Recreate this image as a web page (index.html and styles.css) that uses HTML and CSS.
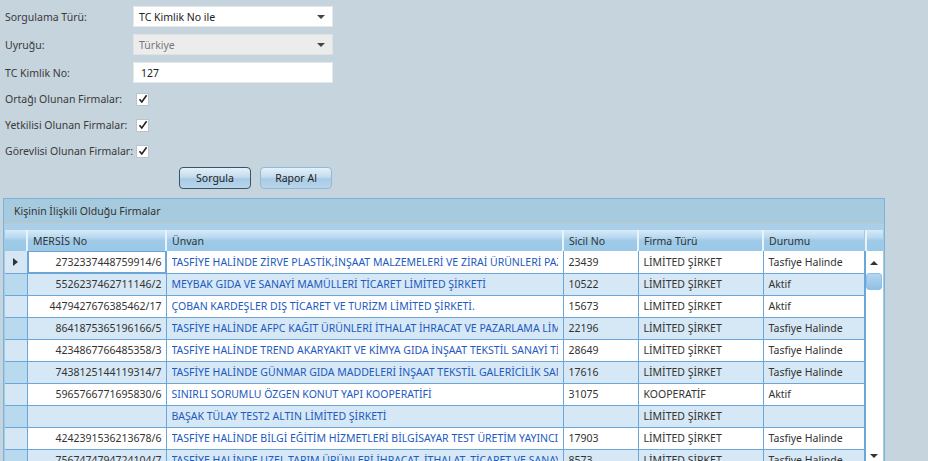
FILE: index.html
```html
<!DOCTYPE html>
<html lang="tr">
<head>
<meta charset="utf-8">
<link rel="stylesheet" href="styles.css">
</head>
<body>
<div class="page">
  <form class="form">
    <div class="frow">
      <label class="lbl">Sorgulama Türü:</label>
      <div class="select"><span>TC Kimlik No ile</span><span class="arrow"></span></div>
    </div>
    <div class="frow">
      <label class="lbl">Uyruğu:</label>
      <div class="select disabled"><span>Türkiye</span><span class="arrow"></span></div>
    </div>
    <div class="frow">
      <label class="lbl">TC Kimlik No:</label>
      <div class="input">127</div>
    </div>
    <div class="crow first">
      <label class="clbl">Ortağı Olunan Firmalar:</label>
      <span class="check"><svg width="10" height="10" viewBox="0 0 10 10"><path d="M1.5 5.2 L3.8 8 L8.6 1.2" fill="none" stroke="#222" stroke-width="1.6"/></svg></span>
    </div>
    <div class="crow">
      <label class="clbl">Yetkilisi Olunan Firmalar:</label>
      <span class="check"><svg width="10" height="10" viewBox="0 0 10 10"><path d="M1.5 5.2 L3.8 8 L8.6 1.2" fill="none" stroke="#222" stroke-width="1.6"/></svg></span>
    </div>
    <div class="crow">
      <label class="clbl">Görevlisi Olunan Firmalar:</label>
      <span class="check"><svg width="10" height="10" viewBox="0 0 10 10"><path d="M1.5 5.2 L3.8 8 L8.6 1.2" fill="none" stroke="#222" stroke-width="1.6"/></svg></span>
    </div>
    <div class="brow">
      <button type="button" class="btn primary">Sorgula</button>
      <button type="button" class="btn">Rapor Al</button>
    </div>
  </form>

  <section class="panel">
    <div class="ptitle">Kişinin İlişkili Olduğu Firmalar</div>
    <div class="band"></div>
    <div class="gridwrap">
      <table class="grid">
        <colgroup>
          <col class="c0"><col class="c1"><col class="c2"><col class="c3"><col class="c4"><col class="c5">
        </colgroup>
        <thead>
          <tr><th class="ind"></th><th>MERSİS No</th><th>Ünvan</th><th>Sicil No</th><th>Firma Türü</th><th>Durumu</th></tr>
        </thead>
        <tbody>
          <tr class="w sel"><td class="ind"><span class="tri"></span></td><td class="num cur">2732337448759914/6</td><td class="name"><div class="clip">TASFİYE HALİNDE ZİRVE PLASTİK,İNŞAAT MALZEMELERİ VE ZİRAİ ÜRÜNLERİ PAZARLAMA</div></td><td>23439</td><td>LİMİTED ŞİRKET</td><td>Tasfiye Halinde</td></tr>
          <tr class="b"><td class="ind"></td><td class="num">5526237462711146/2</td><td class="name"><div class="clip">MEYBAK GIDA VE SANAYİ MAMÜLLERİ TİCARET LİMİTED ŞİRKETİ</div></td><td>10522</td><td>LİMİTED ŞİRKET</td><td>Aktif</td></tr>
          <tr class="w"><td class="ind"></td><td class="num">4479427676385462/17</td><td class="name"><div class="clip">ÇOBAN KARDEŞLER DIŞ TİCARET VE TURİZM LİMİTED ŞİRKETİ.</div></td><td>15673</td><td>LİMİTED ŞİRKET</td><td>Aktif</td></tr>
          <tr class="b"><td class="ind"></td><td class="num">8641875365196166/5</td><td class="name"><div class="clip">TASFİYE HALİNDE AFPC KAĞIT ÜRÜNLERİ İTHALAT İHRACAT VE PAZARLAMA LİMİTED</div></td><td>22196</td><td>LİMİTED ŞİRKET</td><td>Tasfiye Halinde</td></tr>
          <tr class="w"><td class="ind"></td><td class="num">4234867766485358/3</td><td class="name"><div class="clip">TASFİYE HALİNDE TREND AKARYAKIT VE KİMYA GIDA İNŞAAT TEKSTİL SANAYİ TİCARET</div></td><td>28649</td><td>LİMİTED ŞİRKET</td><td>Tasfiye Halinde</td></tr>
          <tr class="b"><td class="ind"></td><td class="num">7438125144119314/7</td><td class="name"><div class="clip">TASFİYE HALİNDE GÜNMAR GIDA MADDELERİ İNŞAAT TEKSTİL GALERİCİLİK SANAYİ</div></td><td>17616</td><td>LİMİTED ŞİRKET</td><td>Tasfiye Halinde</td></tr>
          <tr class="w"><td class="ind"></td><td class="num">5965766771695830/6</td><td class="name"><div class="clip">SINIRLI SORUMLU ÖZGEN KONUT YAPI KOOPERATİFİ</div></td><td>31075</td><td>KOOPERATİF</td><td>Aktif</td></tr>
          <tr class="b"><td class="ind"></td><td class="num"></td><td class="name"><div class="clip">BAŞAK TÜLAY TEST2 ALTIN LİMİTED ŞİRKETİ</div></td><td></td><td>LİMİTED ŞİRKET</td><td></td></tr>
          <tr class="w"><td class="ind"></td><td class="num">4242391536213678/6</td><td class="name"><div class="clip">TASFİYE HALİNDE BİLGİ EĞİTİM HİZMETLERİ BİLGİSAYAR TEST ÜRETİM YAYINCILIK</div></td><td>17903</td><td>LİMİTED ŞİRKET</td><td>Tasfiye Halinde</td></tr>
          <tr class="b"><td class="ind"></td><td class="num">7567474794724104/7</td><td class="name"><div class="clip">TASFİYE HALİNDE UZEL TARIM ÜRÜNLERİ İHRACAT, İTHALAT, TİCARET VE SANAYİ</div></td><td>8573</td><td>LİMİTED ŞİRKET</td><td>Tasfiye Halinde</td></tr>
        </tbody>
      </table>
      <div class="vscroll">
        <div class="shead"></div>
        <div class="strack">
          <span class="up"></span>
          <span class="thumb"></span>
          <span class="down"></span>
        </div>
      </div>
    </div>
  </section>
</div>
</body>
</html>
```

FILE: styles.css
```css
* { box-sizing: border-box; }
html, body { margin: 0; padding: 0; }
body {
  background: #c6d4de;
  font-family: "Noto Sans", "Open Sans", sans-serif;
  font-size: 10.5px;
  color: #333;
  width: 928px;
  height: 461px;
  overflow: hidden;
}
.page { padding: 6px 0 0 0; }
.form { padding-left: 5px; }
.frow {
  display: flex;
  align-items: center;
  height: 21px;
  margin-bottom: 7px;
}
.lbl { width: 128px; color: #3a3a3a; white-space: nowrap; }
.select, .input {
  width: 200px;
  height: 21px;
  background: #fff;
  display: flex;
  align-items: center;
  justify-content: space-between;
  padding: 0 7px 0 5px;
  color: #222;
  border: 1px solid #e4e8eb;
}
.select.disabled { background: #ececec; color: #777; border-color: #dfe3e6; }
.arrow {
  width: 0; height: 0;
  border-left: 4px solid transparent;
  border-right: 4px solid transparent;
  border-top: 4px solid #444;
}
.input { padding-left: 7px; }
.crow {
  display: flex;
  align-items: center;
  height: 18px;
  margin-bottom: 8px;
}
.crow.first { margin-top: 1px; }
.clbl { width: 131px; color: #3a3a3a; white-space: nowrap; }
.check {
  width: 13px; height: 13px;
  background: #fff;
  border: 1px solid #b9c4cc;
  display: flex;
  align-items: center;
  justify-content: center;
}
.brow {
  display: flex;
  gap: 9px;
  padding-left: 174px;
  margin-top: -1px;
}
.btn {
  width: 72px;
  height: 22px;
  font-family: inherit;
  font-size: 10.5px;
  color: #222;
  border: 1px solid #8fb9d8;
  border-radius: 4px;
  background: linear-gradient(#e4f0f9 0%, #c4dcee 45%, #a9cbe6 55%, #b8d6ec 100%);
  padding: 0;
}
.btn.primary { border-color: #3b5366; }

.panel {
  margin: 9px 0 0 3px;
  width: 882px;
  height: 270px;
  border: 1px solid #78b2de;
  background: #a6cbde;
}
.ptitle {
  height: 25px;
  line-height: 25px;
  padding-left: 10px;
  color: #333;
  border-bottom: 1px solid #bdc7cc;
}
.band {
  height: 6px;
  background: #a9d0e8;
}
.gridwrap {
  display: flex;
  margin-left: 1px;
  height: 232px;
  overflow: hidden;
}
.grid {
  border-collapse: collapse;
  table-layout: fixed;
  width: 859px;
}
col.c0 { width: 22px; }
col.c1 { width: 139px; }
col.c2 { width: 397px; }
col.c3 { width: 75px; }
col.c4 { width: 125px; }
col.c5 { width: 101px; }
.grid th {
  height: 21px;
  font-weight: normal;
  text-align: left;
  padding: 0 5px;
  color: #333;
  background: linear-gradient(#d8ebf8 0%, #b7d9f0 35%, #9fcbe9 50%, #9bc8e8 100%);
  border-left: 2px solid #e8f2fa;
}
.grid th.ind { border-left: none; }
.grid td {
  height: 22px;
  padding: 0 5px;
  white-space: nowrap;
  overflow: hidden;
  border: 1px solid #6aa6d8;
  border-top: none;
  color: #333;
}
.grid tr.w td { background: #fff; }
.grid tr.b td { background: #d6e8f5; }
.grid td.ind { border-left: none; padding: 0; }
.grid tr.w td.ind { background: #d5e7f4; }
.grid tr.b td.ind { background: #b9d9ef; }
.grid td.num { text-align: right; padding-right: 4px; }
.grid td.name { color: #1d5bc0; }
.clip { width: 100%; overflow: hidden; white-space: nowrap; }
.grid td.cur { box-shadow: inset 0 0 0 1px #6aa6d8; }
.tri {
  display: block;
  margin-left: 8px;
  width: 0; height: 0;
  border-top: 4px solid transparent;
  border-bottom: 4px solid transparent;
  border-left: 5px solid #333;
}
.vscroll {
  width: 18px;
  display: flex;
  flex-direction: column;
}
.shead {
  height: 21px;
  border-left: 2px solid #e8f2fa;
  background: linear-gradient(#d8ebf8 0%, #b7d9f0 35%, #9fcbe9 50%, #9bc8e8 100%);
}
.strack {
  flex: 1;
  background: #fff;
  border-left: 1px solid #6aa6d8;
  display: flex;
  flex-direction: column;
  align-items: center;
}
.up {
  margin-top: 10px;
  width: 0; height: 0;
  border-left: 4px solid transparent;
  border-right: 4px solid transparent;
  border-bottom: 4px solid #333;
}
.thumb {
  margin-top: 8px;
  width: 16px;
  height: 17px;
  border: 1px solid #8cc0e8;
  border-radius: 3px;
  background: linear-gradient(#b6d6ef, #8fc0e6);
}
.down {
  margin-top: auto;
  margin-bottom: 4px;
  width: 0; height: 0;
  border-left: 4px solid transparent;
  border-right: 4px solid transparent;
  border-top: 4px solid #333;
}
```
